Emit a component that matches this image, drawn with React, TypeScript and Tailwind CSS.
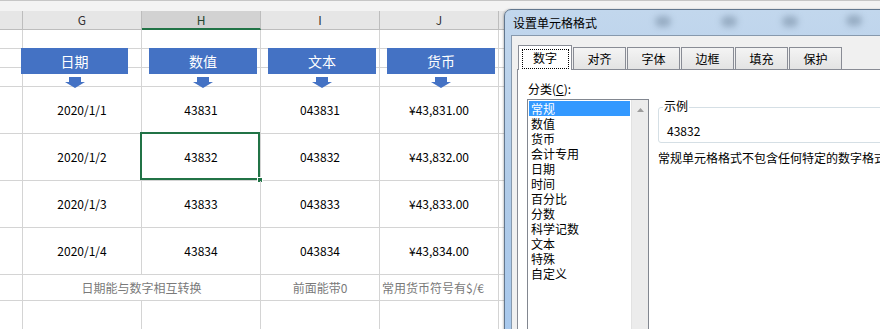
import React from "react";

const cell = "border-r border-b border-[#d4d4d4]";
const dataCell = `${cell} flex items-center justify-center text-[12px] text-black`;

function Empty() {
  return <div className={cell} />;
}

function Arrow({ cx }: { cx: number }) {
  return (
    <svg
      className="absolute top-[77px]"
      style={{ left: cx - 10 }}
      width="20"
      height="11"
      viewBox="0 0 20 11"
    >
      <path d="M4 0H16V5H20L10 11L0 5H4Z" fill="#4472c4" />
    </svg>
  );
}

const banners = [
  { left: 21, w: 107, label: "日期" },
  { left: 149, w: 108, label: "数值" },
  { left: 268, w: 108, label: "文本" },
  { left: 387, w: 108, label: "货币" },
];

const rows = [
  ["2020/1/1", "43831", "043831", "¥43,831.00"],
  ["2020/1/2", "43832", "043832", "¥43,832.00"],
  ["2020/1/3", "43833", "043833", "¥43,833.00"],
  ["2020/1/4", "43834", "043834", "¥43,834.00"],
];

const categories = [
  "常规",
  "数值",
  "货币",
  "会计专用",
  "日期",
  "时间",
  "百分比",
  "分数",
  "科学记数",
  "文本",
  "特殊",
  "自定义",
];

const tabs = ["对齐", "字体", "边框", "填充", "保护"];

export default function App() {
  return (
    <div className="relative w-[880px] h-[329px] overflow-hidden bg-white font-['Noto_Sans_CJK_SC','Noto_Sans',sans-serif]">
      {/* top strip */}
      <div className="h-[11px] bg-[#f3f3f3] border-t border-[#c6c6c6]" />
      {/* sheet grid */}
      <div className="grid grid-cols-[23px_119px_119px_119px_119px_1fr] grid-rows-[19px_19px_19px_19px_47px_47px_47px_47px_26px_40px]">
        {/* header */}
        <div className="bg-[#e6e6e6] border-r border-b border-[#bdbdbd]" />
        <div className="bg-[#e6e6e6] border-r border-b border-[#bdbdbd] flex items-center justify-center text-[12px] text-[#333]">G</div>
        <div className="bg-[#d2d2d2] border-r border-[#bdbdbd] border-b-2 border-b-[#217346] flex items-center justify-center text-[12px] text-[#24452f]">H</div>
        <div className="bg-[#e6e6e6] border-r border-b border-[#bdbdbd] flex items-center justify-center text-[12px] text-[#333]">I</div>
        <div className="bg-[#e6e6e6] border-r border-b border-[#bdbdbd] flex items-center justify-center text-[12px] text-[#333]">J</div>
        <div className="bg-[#e6e6e6] border-b border-[#bdbdbd]" />

        {/* 3 short rows */}
        {Array.from({ length: 18 }).map((_, i) => (
          <Empty key={"s" + i} />
        ))}

        {/* data rows */}
        {rows.map((r, ri) => (
          <React.Fragment key={ri}>
            <Empty />
            <div className={dataCell}>{r[0]}</div>
            <div className={`${dataCell} relative`}>
              {r[1]}
              {ri === 1 && (
                <>
                  <div className="absolute -left-[2px] -top-[2px] right-0 bottom-0 border-2 border-[#217346]" />
                  <div className="absolute -right-[3px] -bottom-[3px] w-[6px] h-[6px] bg-[#217346] border border-white" />
                </>
              )}
            </div>
            <div className={dataCell}>{r[2]}</div>
            <div className={dataCell}>{r[3]}</div>
            <Empty />
          </React.Fragment>
        ))}

        {/* note row */}
        <Empty />
        <div className={`${cell} col-span-2 flex items-center justify-center text-[12px] text-[#7a7a7a]`}>
          日期能与数字相互转换
        </div>
        <div className={`${cell} flex items-center justify-center text-[12px] text-[#7a7a7a]`}>前面能带0</div>
        <div className={`${cell} flex items-center pl-[2px] text-[12px] text-[#7a7a7a] whitespace-nowrap`}>
          常用货币符号有$/€
        </div>
        <Empty />

        {/* last row */}
        {Array.from({ length: 6 }).map((_, i) => (
          <Empty key={"l" + i} />
        ))}
      </div>

      {/* banners */}
      {banners.map((b) => (
        <React.Fragment key={b.label}>
          <div
            className="absolute top-[48px] h-[26px] bg-[#4472c4] flex items-center justify-center text-white text-[14px]"
            style={{ left: b.left, width: b.w }}
          >
            {b.label}
          </div>
          <Arrow cx={b.left + b.w / 2} />
        </React.Fragment>
      ))}

      {/* dialog */}
      <div className="absolute left-[504px] top-[9px] w-[420px] h-[360px] rounded-tl-[7px] border border-[#62778e] bg-gradient-to-b from-[#c2d7ed] via-[#b0cbe8] to-[#a6c8ee] shadow-[-1px_0_2px_rgba(0,0,0,0.2)] flex flex-col">
        {/* title */}
        <div className="relative h-[25px] flex items-center pl-[8px] text-[12px] text-black">
          <div className="absolute left-[150px] top-[6px] w-[16px] h-[11px] rounded-full bg-[#6f859c] opacity-50 blur-[3px]" />
          <div className="absolute left-[216px] top-[6px] w-[16px] h-[11px] rounded-full bg-[#6f859c] opacity-50 blur-[3px]" />
          <div className="absolute left-[277px] top-[6px] w-[16px] h-[11px] rounded-full bg-[#6f859c] opacity-50 blur-[3px]" />
          <div className="absolute left-[341px] top-[5px] w-[16px] h-[11px] rounded-full bg-[#6f859c] opacity-50 blur-[3px]" />
          <span className="relative">设置单元格格式</span>
        </div>
        {/* content */}
        <div className="flex-1 ml-[6px] border-l border-t border-[#8799ad] bg-[#f0f0f0] pl-[5px] pt-[9px] flex flex-col text-[12px] text-black">
          {/* tabs */}
          <div className="flex items-end gap-[1px] pl-[1px] h-[24px]">
            <div className="relative z-10 w-[54px] h-[25px] -mb-[1px] bg-white border-x border-t border-[#898c95] flex items-center justify-center">
              <div className="absolute left-[3px] right-[2px] top-[3px] bottom-[1px] border border-dotted border-black" />
              数字
            </div>
            {tabs.map((t) => (
              <div
                key={t}
                className="w-[53px] h-[22px] bg-gradient-to-b from-[#f4f4f4] to-[#e3e3e3] border-x border-t border-[#898c95] flex items-center justify-center"
              >
                {t}
              </div>
            ))}
          </div>
          {/* panel */}
          <div className="flex-1 border-t border-l border-[#898c95] bg-white pt-[11px] pl-[9px] flex">
            <div className="w-[122px] flex flex-col">
              <div className="h-[15px] leading-[15px] mb-[3px] pl-[1px]">
                分类(<span className="underline">C</span>):
              </div>
              <div className="h-[260px] border border-[#828790] flex">
                <div className="flex-1 p-[1px]">
                  {categories.map((c, i) => (
                    <div
                      key={c}
                      className={`h-[15px] leading-[15px] pl-[2px] ${i === 0 ? "bg-[#3399ff] text-white" : ""}`}
                    >
                      {c}
                    </div>
                  ))}
                </div>
                <div className="w-[17px] bg-[#ececec] border-l border-[#e2e2e2] flex justify-center pt-[8px]">
                  <svg width="7" height="4" viewBox="0 0 7 4">
                    <path d="M3.5 0L7 4H0Z" fill="#9c9c9c" />
                  </svg>
                </div>
              </div>
            </div>
            <div className="ml-[9px] flex-1 flex flex-col">
              <div className="relative mt-[26px] h-[36px] border border-[#d5dfe5] rounded-[3px] flex items-end pb-[4px] pl-[8px]">
                <span className="absolute left-[4px] -top-[10px] leading-[15px] px-[1px] bg-white">示例</span>
                <span className="leading-[15px]">43832</span>
              </div>
              <div className="mt-[7px] leading-[15px] whitespace-nowrap">常规单元格格式不包含任何特定的数字格式。</div>
            </div>
          </div>
        </div>
      </div>
    </div>
  );
}
